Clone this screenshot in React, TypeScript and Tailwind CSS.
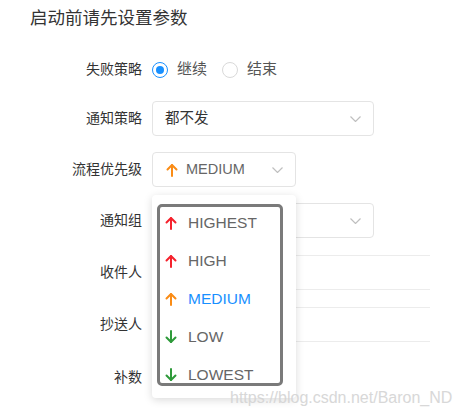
import React from "react";

const FONT = { fontFamily: '"Liberation Sans", "Noto Sans CJK SC", sans-serif' };

type Level = { name: string; up: boolean; color: string; active?: boolean };

const levels: Level[] = [
  { name: "HIGHEST", up: true, color: "#f5222d" },
  { name: "HIGH", up: true, color: "#f5222d" },
  { name: "MEDIUM", up: true, color: "#fa8c16", active: true },
  { name: "LOW", up: false, color: "#2e9a3a" },
  { name: "LOWEST", up: false, color: "#2e9a3a" },
];

function Arrow({ up, color }: { up: boolean; color: string }) {
  return (
    <svg width="12" height="14" viewBox="0 0 12 14" fill="none" stroke={color} strokeWidth="2" strokeLinecap="round" strokeLinejoin="round">
      {up ? (
        <>
          <path d="M6 13V2" />
          <path d="M1.5 6.5L6 2l4.5 4.5" />
        </>
      ) : (
        <>
          <path d="M6 1v11" />
          <path d="M1.5 7.5L6 12l4.5-4.5" />
        </>
      )}
    </svg>
  );
}

function Chevron() {
  return (
    <svg width="11" height="6" viewBox="0 0 11 6" fill="none" stroke="#bfbfbf" strokeWidth="1.2">
      <path d="M0.5 0.5L5.5 5.5L10.5 0.5" />
    </svg>
  );
}

function Row({ label, children, mb = "mb-[16px]" }: { label: string; children?: React.ReactNode; mb?: string }) {
  return (
    <div className={`flex items-center h-[35px] ${mb}`}>
      <div className="w-[142px] text-right text-[14px] text-[#333]">{label}</div>
      <div className="ml-[10px] flex items-center">{children}</div>
    </div>
  );
}

export default function App() {
  return (
    <div className="relative w-[459px] h-[416px] bg-white overflow-hidden" style={FONT}>
      <div className="pl-[30px] pt-[5px] h-[52px] text-[17.5px] text-[#333]">启动前请先设置参数</div>

      <Row label="失败策略" mb="mb-[14px]">
        <span className="w-[16px] h-[16px] rounded-full border border-[#1890ff] flex items-center justify-center">
          <span className="w-[8px] h-[8px] rounded-full bg-[#1890ff]" />
        </span>
        <span className="ml-[9px] text-[15px] text-[#555]">继续</span>
        <span className="ml-[15px] w-[16px] h-[16px] rounded-full border border-[#d9d9d9]" />
        <span className="ml-[9px] text-[15px] text-[#555]">结束</span>
      </Row>

      <Row label="通知策略">
        <div className="w-[222px] h-[35px] border border-[#e4e4e4] rounded-[4px] flex items-center justify-between pl-[12px] pr-[12px]">
          <span className="text-[14.5px] text-[#333]">都不发</span>
          <Chevron />
        </div>
      </Row>

      <Row label="流程优先级">
        <div className="w-[144px] h-[35px] border border-[#e4e4e4] rounded-[4px] flex items-center justify-between pl-[13px] pr-[12px]">
          <span className="flex items-center gap-[8px] text-[14.5px] text-[#666]">
            <Arrow up color="#fa8c16" />
            MEDIUM
          </span>
          <Chevron />
        </div>
      </Row>

      <Row label="通知组" mb="mb-[17px]">
        <div className="w-[222px] h-[35px] border border-[#e4e4e4] rounded-[4px] flex items-center justify-end pr-[12px]">
          <Chevron />
        </div>
      </Row>

      <Row label="收件人" mb="mb-[17px]">
        <div className="w-[278px] h-[35px] border-y border-[#ececec]" />
      </Row>

      <Row label="抄送人" mb="mb-[18px]">
        <div className="w-[278px] h-[35px] border-y border-[#ececec]" />
      </Row>

      <Row label="补数" />

      {/* dropdown menu */}
      <div className="absolute left-[152px] top-[195px] w-[144px] bg-white rounded-[4px] shadow-[0_2px_8px_rgba(0,0,0,0.15)] pt-[9px] pb-[4px]">
        {levels.map((l) => (
          <div key={l.name} className="h-[38px] flex items-center pl-[13px] gap-[11px]">
            <Arrow up={l.up} color={l.color} />
            <span className={`text-[15.5px] ${l.active ? "text-[#1890ff]" : "text-[#666]"}`}>{l.name}</span>
          </div>
        ))}
      </div>

      {/* annotation frame */}
      <div className="absolute left-[157px] top-[204px] w-[126px] h-[182px] border-[3px] border-[#7a7a7a] rounded-[5px]" />

      {/* watermark */}
      <div className="absolute left-[230px] top-[386px] text-[16px] text-[#d4d4d4] opacity-90">https://blog.csdn.net/Baron_ND</div>
    </div>
  );
}
